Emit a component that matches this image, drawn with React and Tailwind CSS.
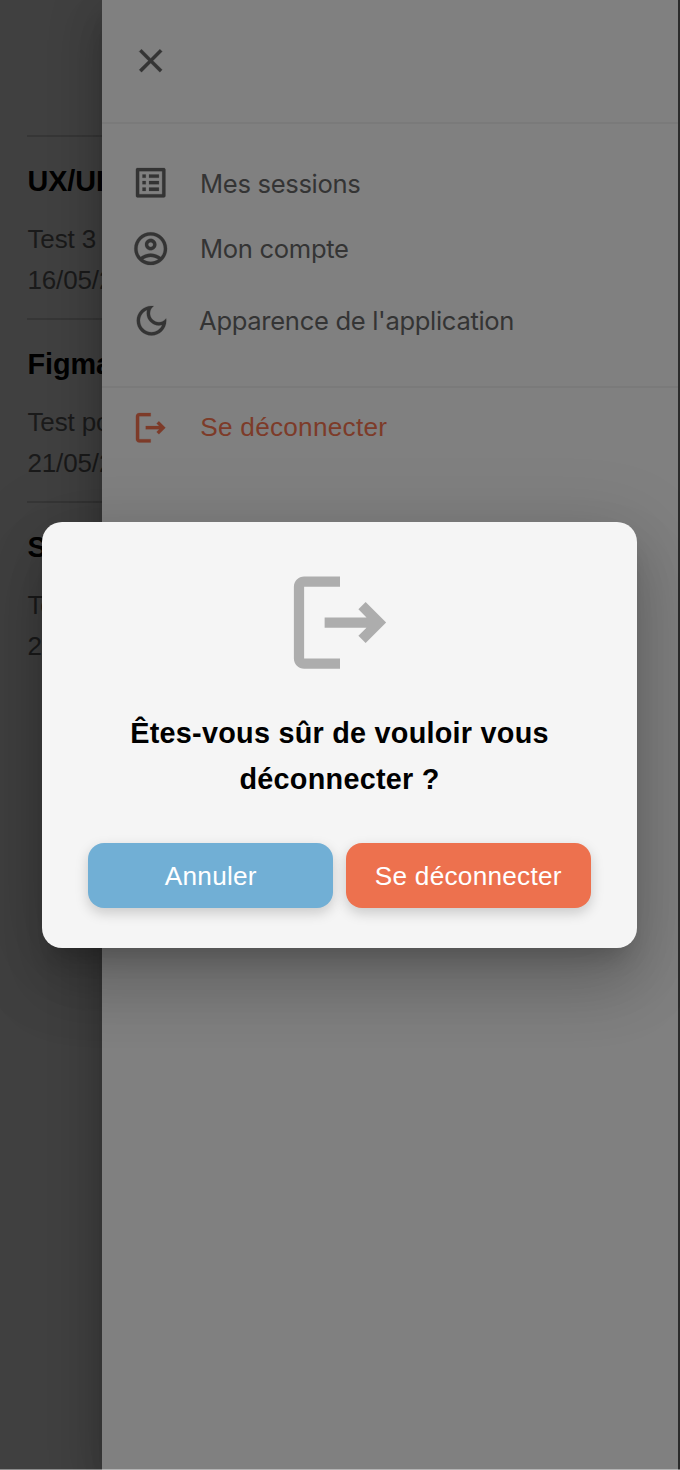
const ICONS = {
  close:
    "M19 6.41 17.59 5 12 10.59 6.41 5 5 6.41 10.59 12 5 17.59 6.41 19 12 13.41 17.59 19 19 17.59 13.41 12z",
  list:
    "M11 7h6v2h-6zm0 4h6v2h-6zm0 4h6v2h-6zM7 7h2v2H7zm0 4h2v2H7zm0 4h2v2H7zM20.1 3H3.9c-.5 0-.9.4-.9.9v16.2c0 .4.4.9.9.9h16.2c.4 0 .9-.5.9-.9V3.9c0-.5-.5-.9-.9-.9zM19 19H5V5h14v14z",
  account:
    "M12 2C6.48 2 2 6.48 2 12s4.48 10 10 10 10-4.48 10-10S17.52 2 12 2zM7.35 18.5C8.66 17.56 10.26 17 12 17s3.34.56 4.65 1.5c-1.31.94-2.91 1.5-4.65 1.5s-3.34-.56-4.65-1.5zm10.79-1.38C16.45 15.8 14.32 15 12 15s-4.45.8-6.14 2.12C4.7 15.73 4 13.95 4 12c0-4.42 3.58-8 8-8s8 3.58 8 8c0 1.95-.7 3.73-1.86 5.12zM12 6c-1.93 0-3.5 1.57-3.5 3.5S10.07 13 12 13s3.5-1.57 3.5-3.5S13.93 6 12 6zm0 5c-.83 0-1.5-.67-1.5-1.5S11.17 8 12 8s1.5.67 1.5 1.5S12.83 11 12 11z",
  moon:
    "M9.37 5.51c-.18.64-.27 1.31-.27 1.99 0 4.08 3.32 7.4 7.4 7.4.68 0 1.35-.09 1.99-.27C17.45 17.19 14.93 19 12 19c-3.86 0-7-3.14-7-7 0-2.93 1.81-5.45 4.37-6.49zM12 3c-4.97 0-9 4.03-9 9s4.03 9 9 9 9-4.03 9-9c0-.46-.04-.92-.1-1.36-.98 1.37-2.58 2.26-4.4 2.26-2.98 0-5.4-2.42-5.4-5.4 0-1.81.89-3.42 2.26-4.4-.44-.06-.9-.1-1.36-.1z",
  logout:
    "m17 8-1.41 1.41L17.17 11H9v2h8.17l-1.58 1.58L17 16l4-4-4-4zM5 5h7V3H5c-1.1 0-2 .9-2 2v14c0 1.1.9 2 2 2h7v-2H5V5z",
};

function Icon({ name, className = "size-[39.4px]", stroke = 0.12 }) {
  return (
    <svg
      viewBox="0 0 24 24"
      fill="currentColor"
      stroke="currentColor"
      strokeWidth={stroke}
      aria-hidden="true"
      className={`block shrink-0 ${className}`}
    >
      <path fillRule="evenodd" d={ICONS[name]} />
    </svg>
  );
}

const SESSIONS = [
  { title: "UX/UI", label: "Test 3", date: "16/05/2024" },
  { title: "Figma", label: "Test pour", date: "21/05/2024" },
  { title: "Sketch", label: "Test", date: "21/05/2024" },
];

function SessionList() {
  return (
    <main className="w-[102px] overflow-hidden pt-[134.5px] pl-[27px] whitespace-nowrap">
      {SESSIONS.map((s) => (
        <article key={s.title} className="h-[183px] border-t-2 border-[#363636] pt-[24.5px] pl-[0.5px]">
          <h2 className="text-[28.8px] leading-[40px] font-bold tracking-[-0.1px] text-black">{s.title}</h2>
          <p className="mt-[18px] text-[26px] leading-[41px] tracking-[-0.15px] text-[#1a1a1a]">{s.label}</p>
          <p className="text-[26px] leading-[41px] tracking-[-0.15px] text-[#1a1a1a]">{s.date}</p>
        </article>
      ))}
    </main>
  );
}

function MenuItem({ icon, label, className = "", iconClass = "", textClass = "" }) {
  return (
    <li className={`flex items-center ${className}`}>
      <Icon name={icon} className={`size-[39.4px] ${iconClass}`} />
      <span className={`whitespace-nowrap ${textClass}`}>{label}</span>
    </li>
  );
}

const MENU_TEXT = "pt-[2px] font-['Inter',sans-serif] text-[25.6px] tracking-[-0.33px]";

function Drawer() {
  return (
    <aside className="absolute inset-y-0 left-[101.7px] w-[576.3px] bg-[#808080] text-[#343434] shadow-[0_13px_16px_-8px_rgba(0,0,0,0.2),0_26px_39px_3px_rgba(0,0,0,0.14),0_10px_49px_8px_rgba(0,0,0,0.12)]">
      <header className="flex h-[124px] items-center border-b-2 border-[#7a7a7a] pl-[29.6px]">
        <Icon name="close" stroke={0.2} />
      </header>
      <ul className="flex h-[264px] flex-col border-b-2 border-[#7a7a7a] pt-[26.5px] pl-[29.6px]">
        <MenuItem icon="list" label="Mes sessions" className="h-[65px]" textClass={`ml-[29.4px] ${MENU_TEXT}`} />
        <MenuItem icon="account" label="Mon compte" className="h-[65.5px]" textClass={`ml-[29.4px] ${MENU_TEXT}`} />
        <MenuItem
          icon="moon"
          label="Apparence de l'application"
          className="mt-[7px] h-[65px]"
          iconClass="translate-x-[0.8px]"
          textClass={`ml-[28.4px] ${MENU_TEXT}`}
        />
      </ul>
      <ul className="pt-[7px] pl-[29.6px]">
        <MenuItem
          icon="logout"
          label="Se déconnecter"
          className="h-[65px] text-[#7d3b29]"
          textClass="ml-[29.6px] pt-[1px] text-[26.2px] tracking-[0.25px]"
        />
      </ul>
    </aside>
  );
}

function DialogButton({ children, className }) {
  return (
    <button
      className={`h-[65px] flex-1 rounded-[16px] pt-[2px] pl-[0.6px] text-[26.2px] tracking-[0.25px] text-white shadow-[0_5px_13px_rgba(0,0,0,0.18)] ${className}`}
    >
      {children}
    </button>
  );
}

function LogoutDialog() {
  return (
    <section
      role="dialog"
      className="absolute top-[522px] left-[42px] flex h-[425.5px] w-[594.5px] flex-col items-center rounded-[20px] bg-[#f5f5f5] px-[46px] pt-[39.3px] shadow-[0_18px_25px_-11px_rgba(0,0,0,0.2),0_39px_62px_5px_rgba(0,0,0,0.14),0_15px_75px_13px_rgba(0,0,0,0.12)]"
    >
      <Icon name="logout" stroke={0} className="size-[123px] translate-x-[0.5px] text-[#adadad]" />
      <h1 className="mt-[25.7px] pl-[0.6px] text-center text-[28.8px] leading-[46px] font-bold tracking-[0.25px] text-black">
        Êtes-vous sûr de vouloir vous
        <br />
        déconnecter ?
      </h1>
      <div className="mt-[41px] flex w-full gap-[12.5px]">
        <DialogButton className="bg-[#71afd5]">Annuler</DialogButton>
        <DialogButton className="bg-[#ed714e]">Se déconnecter</DialogButton>
      </div>
    </section>
  );
}

export default function App() {
  return (
    <div className="relative h-[1470px] w-[680px] overflow-hidden bg-[#404040] font-['Liberation_Sans',Arial,sans-serif]">
      <SessionList />
      <Drawer />
      <div className="absolute inset-y-0 right-0 w-[2px] bg-[#2b2b2b]" />
      <LogoutDialog />
      <div className="absolute inset-x-0 bottom-0 h-px bg-white/40" />
    </div>
  );
}
